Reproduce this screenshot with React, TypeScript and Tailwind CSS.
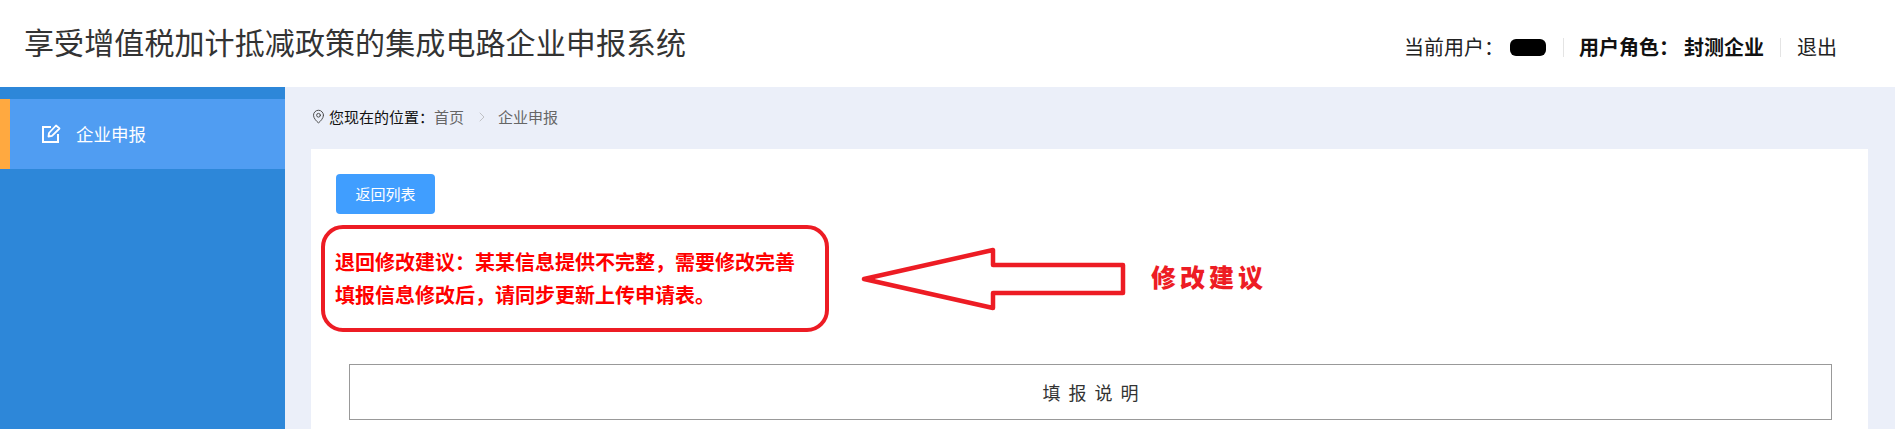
import { MapPin, ChevronRight } from "lucide-react";

function EditIcon() {
  return (
    <svg width="20" height="20" viewBox="0 0 20 20" fill="none" stroke="currentColor" className="shrink-0">
      <path d="M10 3H2v15h15v-8" strokeWidth="2" />
      <path d="M7.5 12.5 8 9 15 1.5 18.5 4.5 11 11.8Z" strokeWidth="1.8" strokeLinejoin="round" />
    </svg>
  );
}

function Header() {
  return (
    <header className="flex h-[87px] items-center justify-between bg-white pl-[24px] pr-[58px]">
      <h1 className="mb-[5px] text-[30px] font-normal leading-none tracking-[0.1px] text-[#333]">享受增值税加计抵减政策的集成电路企业申报系统</h1>
      <div className="mt-[7px] flex items-center text-[20px] leading-none text-[#222]">
        <span className="w-[106px]">当前用户：</span>
        <span className="h-[17px] w-[36px] rounded-[6px] bg-black" />
        <span className="ml-[17px] mr-[15px] h-[19px] w-px bg-[#e4e4e4]" />
        <span className="w-[105px] font-bold text-[#111]">用户角色：</span>
        <span className="font-bold text-[#111]">封测企业</span>
        <span className="ml-[16px] mr-[16px] h-[19px] w-px bg-[#e4e4e4]" />
        <span>退出</span>
      </div>
    </header>
  );
}

function Sidebar() {
  return (
    <aside className="w-[285px] shrink-0 bg-[#2d87d9] pt-[12px]">
      <div className="flex h-[70px] items-center border-l-[10px] border-[#ffa940] bg-[#509df2] pl-[31px] text-white">
        <EditIcon />
        <span className="ml-[15px] text-[17.5px] leading-none">企业申报</span>
      </div>
    </aside>
  );
}

function Breadcrumb() {
  return (
    <div className="flex h-[60px] items-center pb-[1px] text-[15px] leading-none text-[#666]">
      <MapPin size={15} strokeWidth={1.5} className="text-[#444]" />
      <span className="ml-[3px] text-[#111]">您现在的位置：</span>
      <span>首页</span>
      <ChevronRight size={16} strokeWidth={1} className="ml-[10px] mr-[8px] text-[#aaa]" />
      <span>企业申报</span>
    </div>
  );
}

function Arrow() {
  return (
    <svg width="268" height="66" viewBox="0 0 268 66" className="ml-[32px] shrink-0">
      <path
        d="M3 33 L132 4 L132 19 L262 19 L262 47 L132 47 L132 62 Z"
        fill="none"
        stroke="#ed1c24"
        strokeWidth="4.5"
        strokeLinejoin="round"
      />
    </svg>
  );
}

function Notice() {
  return (
    <div className="mt-[11px] flex items-center">
      <div className="flex h-[107px] w-[508px] shrink-0 flex-col justify-center rounded-[22px] border-[4px] border-[#ed1c24] pb-[1px] pl-[10px] text-[20px] font-bold leading-[33px] text-[#f00]">
        <p>退回修改建议：某某信息提供不完整，需要修改完善</p>
        <p>填报信息修改后，请同步更新上传申请表。</p>
      </div>
      <Arrow />
      <span className="mb-[4px] ml-[22px] text-[25px] font-black leading-none tracking-[4px] text-[#ed1c24]">修改建议</span>
    </div>
  );
}

export default function App() {
  return (
    <div className="flex h-[429px] w-full flex-col overflow-hidden bg-white font-['Noto_Sans_CJK_SC','Liberation_Sans',sans-serif]">
      <Header />
      <div className="flex min-h-0 flex-1">
        <Sidebar />
        <main className="min-w-0 flex-1 bg-[#ebeff9] pl-[26px] pr-[27px]">
          <Breadcrumb />
          <div className="mt-[2px] h-full bg-white pl-[10px] pr-[36px] pt-[25px]">
            <button className="ml-[15px] block h-[40px] w-[99px] rounded-[4px] bg-[#409eff] text-[15px] text-white">返回列表</button>
            <Notice />
            <div className="ml-[28px] mt-[32px] flex h-[56px] items-center justify-center border border-[#999] pl-[8px] text-[18px] tracking-[8px] text-[#333]">
              填报说明
            </div>
          </div>
        </main>
      </div>
    </div>
  );
}
